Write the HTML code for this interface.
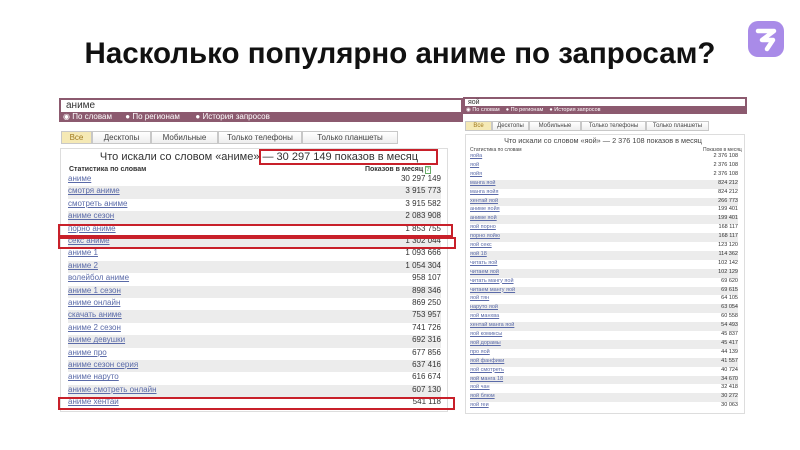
<!DOCTYPE html>
<html><head><meta charset="utf-8"><style>
*{margin:0;padding:0;box-sizing:border-box}
body{width:800px;height:450px;background:#fff;position:relative;overflow:hidden;font-family:"Liberation Sans",Arial,sans-serif}
.abs{position:absolute}
h1{position:absolute;left:0;width:800px;top:37px;text-align:center;font-size:29.5px;font-weight:bold;color:#111}
.inp{background:#fff;border:2px solid #8c5a6f;border-bottom:none;color:#333}
.strip{background:#8c5a6f;color:#fff;white-space:nowrap}
.tab{position:absolute;border:1px solid #c8c8c8;background:linear-gradient(#fff,#eee);color:#444;text-align:center}
.tab.on{background:#f5e9b5;color:#a07a20}
.box{position:absolute;border:1px solid #ddd;background:#fff}
.row{position:absolute;white-space:nowrap}
.row a{color:#5a6aa8;text-decoration:underline}
.row b{position:absolute;right:0;font-weight:normal;color:#333}
.g{background:#ececec}
.red{position:absolute;border:2px solid #c8202a}
</style></head><body>
<h1>Насколько популярно аниме по запросам?</h1>
<svg class="abs" style="left:747px;top:20px" width="38" height="38" viewBox="0 0 38 38"><rect x="1" y="1" width="36" height="36" rx="10" fill="#a98be8"/><path d="M11 11H27L15 20H26L20 29" fill="none" stroke="#fff" stroke-width="4.5" stroke-linejoin="round" stroke-linecap="round"/></svg>

<!-- LEFT -->
<div class="abs inp" style="left:59px;top:98px;width:404px;height:14px;font-size:10px;padding-left:5px;line-height:12px">аниме</div>
<div class="abs strip" style="left:59px;top:112px;width:404px;height:10px;font-size:8px;line-height:10px;padding-left:4px">◉ По словам &nbsp;&nbsp;&nbsp;&nbsp;&nbsp;● По регионам &nbsp;&nbsp;&nbsp;&nbsp;&nbsp;&nbsp;● История запросов</div>
<div class="tab on" style="left:61px;top:131px;width:31px;height:13px;font-size:8px;line-height:12px">Все</div>
<div class="tab" style="left:92px;top:131px;width:59px;height:13px;font-size:8px;line-height:12px">Десктопы</div>
<div class="tab" style="left:151px;top:131px;width:67px;height:13px;font-size:8px;line-height:12px">Мобильные</div>
<div class="tab" style="left:218px;top:131px;width:84px;height:13px;font-size:8px;line-height:12px">Только телефоны</div>
<div class="tab" style="left:302px;top:131px;width:96px;height:13px;font-size:8px;line-height:12px">Только планшеты</div>
<div class="box" style="left:60px;top:148px;width:388px;height:264px"></div>
<div class="abs" style="left:65px;top:151px;width:388px;text-align:center;font-size:11px;color:#333;white-space:nowrap">Что искали со словом «аниме» — 30 297 149 показов в месяц</div>
<div class="abs" style="left:69px;top:166px;font-size:7px;font-weight:bold;color:#333">Статистика по словам</div>
<div class="abs" style="left:365px;top:166px;font-size:7px;font-weight:bold;color:#333">Показов в месяц <span style="color:#6a6;border:1px solid #6a6;font-size:6px">?</span></div>
<div id="L" style="font-size:8px">
<div class="row" style="left:68px;top:174px;width:373px;height:12.4px"><a>аниме</a><b>30 297 149</b></div>
<div class="row g" style="left:68px;top:186.4px;width:373px;height:12.4px"><a>смотря аниме</a><b>3 915 773</b></div>
<div class="row" style="left:68px;top:198.8px;width:373px;height:12.4px"><a>смотреть аниме</a><b>3 915 582</b></div>
<div class="row g" style="left:68px;top:211.2px;width:373px;height:12.4px"><a>аниме сезон</a><b>2 083 908</b></div>
<div class="row" style="left:68px;top:223.6px;width:373px;height:12.4px"><a>порно аниме</a><b>1 853 755</b></div>
<div class="row g" style="left:68px;top:236px;width:373px;height:12.4px"><a>секс аниме</a><b>1 302 044</b></div>
<div class="row" style="left:68px;top:248.4px;width:373px;height:12.4px"><a>аниме 1</a><b>1 093 666</b></div>
<div class="row g" style="left:68px;top:260.8px;width:373px;height:12.4px"><a>аниме 2</a><b>1 054 304</b></div>
<div class="row" style="left:68px;top:273.2px;width:373px;height:12.4px"><a>волейбол аниме</a><b>958 107</b></div>
<div class="row g" style="left:68px;top:285.6px;width:373px;height:12.4px"><a>аниме 1 сезон</a><b>898 346</b></div>
<div class="row" style="left:68px;top:298px;width:373px;height:12.4px"><a>аниме онлайн</a><b>869 250</b></div>
<div class="row g" style="left:68px;top:310.4px;width:373px;height:12.4px"><a>скачать аниме</a><b>753 957</b></div>
<div class="row" style="left:68px;top:322.8px;width:373px;height:12.4px"><a>аниме 2 сезон</a><b>741 726</b></div>
<div class="row g" style="left:68px;top:335.2px;width:373px;height:12.4px"><a>аниме девушки</a><b>692 316</b></div>
<div class="row" style="left:68px;top:347.6px;width:373px;height:12.4px"><a>аниме про</a><b>677 856</b></div>
<div class="row g" style="left:68px;top:360px;width:373px;height:12.4px"><a>аниме сезон серия</a><b>637 416</b></div>
<div class="row" style="left:68px;top:372.4px;width:373px;height:12.4px"><a>аниме наруто</a><b>616 674</b></div>
<div class="row g" style="left:68px;top:384.8px;width:373px;height:12.4px"><a>аниме смотреть онлайн</a><b>607 130</b></div>
<div class="row" style="left:68px;top:397.2px;width:373px;height:12.4px"><a>аниме хентай</a><b>541 118</b></div>
</div>
<div class="red" style="left:259px;top:149px;width:179px;height:16px"></div>
<div class="red" style="left:58px;top:224px;width:395px;height:13px"></div>
<div class="red" style="left:58px;top:237px;width:398px;height:12px"></div>
<div class="red" style="left:58px;top:397px;width:397px;height:13px"></div>

<!-- RIGHT -->
<div class="abs inp" style="left:463px;top:97px;width:284px;height:9px;font-size:7px;padding-left:3px;line-height:8px">яой</div>
<div class="abs strip" style="left:463px;top:106px;width:284px;height:8px;font-size:5.5px;line-height:8px;padding-left:3px">◉ По словам &nbsp;&nbsp;&nbsp;● По регионам &nbsp;&nbsp;&nbsp;● История запросов</div>
<div class="tab on" style="left:465px;top:121px;width:27px;height:10px;font-size:6px;line-height:9px">Все</div>
<div class="tab" style="left:492px;top:121px;width:37px;height:10px;font-size:6px;line-height:9px">Десктопы</div>
<div class="tab" style="left:529px;top:121px;width:52px;height:10px;font-size:6px;line-height:9px">Мобильные</div>
<div class="tab" style="left:581px;top:121px;width:65px;height:10px;font-size:6px;line-height:9px">Только телефоны</div>
<div class="tab" style="left:646px;top:121px;width:63px;height:10px;font-size:6px;line-height:9px">Только планшеты</div>
<div class="box" style="left:465px;top:134px;width:280px;height:280px"></div>
<div class="abs" style="left:465px;top:136px;width:276px;text-align:center;font-size:7.3px;color:#444;white-space:nowrap">Что искали со словом «яой» — 2 376 108 показов в месяц</div>
<div class="abs" style="left:470px;top:147px;font-size:5px;color:#444">Статистика по словам</div>
<div class="abs" style="left:703px;top:147px;font-size:5px;color:#444">Показов в месяц</div>
<div style="font-size:5.5px">
<div class="row" style="left:470px;top:153px;width:268px;height:8.9px"><a>яойа</a><b>2 376 108</b></div>
<div class="row" style="left:470px;top:161.9px;width:268px;height:8.9px"><a>яой</a><b>2 376 108</b></div>
<div class="row" style="left:470px;top:170.8px;width:268px;height:8.9px"><a>яойя</a><b>2 376 108</b></div>
<div class="row g" style="left:470px;top:179.7px;width:268px;height:8.9px"><a>манга яой</a><b>824 212</b></div>
<div class="row" style="left:470px;top:188.6px;width:268px;height:8.9px"><a>манга яойя</a><b>824 212</b></div>
<div class="row g" style="left:470px;top:197.5px;width:268px;height:8.9px"><a>хентай яой</a><b>266 773</b></div>
<div class="row" style="left:470px;top:206.4px;width:268px;height:8.9px"><a>аниме яойя</a><b>199 401</b></div>
<div class="row g" style="left:470px;top:215.3px;width:268px;height:8.9px"><a>аниме яой</a><b>199 401</b></div>
<div class="row" style="left:470px;top:224.2px;width:268px;height:8.9px"><a>яой порно</a><b>168 117</b></div>
<div class="row g" style="left:470px;top:233.1px;width:268px;height:8.9px"><a>порно яойю</a><b>168 117</b></div>
<div class="row" style="left:470px;top:242px;width:268px;height:8.9px"><a>яой секс</a><b>123 120</b></div>
<div class="row g" style="left:470px;top:250.9px;width:268px;height:8.9px"><a>яой 18</a><b>114 362</b></div>
<div class="row" style="left:470px;top:259.8px;width:268px;height:8.9px"><a>читать яой</a><b>102 142</b></div>
<div class="row g" style="left:470px;top:268.7px;width:268px;height:8.9px"><a>читаем яой</a><b>102 129</b></div>
<div class="row" style="left:470px;top:277.6px;width:268px;height:8.9px"><a>читать мангу яой</a><b>69 620</b></div>
<div class="row g" style="left:470px;top:286.5px;width:268px;height:8.9px"><a>читаем мангу яой</a><b>69 615</b></div>
<div class="row" style="left:470px;top:295.4px;width:268px;height:8.9px"><a>яой тян</a><b>64 105</b></div>
<div class="row g" style="left:470px;top:304.3px;width:268px;height:8.9px"><a>наруто яой</a><b>63 054</b></div>
<div class="row" style="left:470px;top:313.2px;width:268px;height:8.9px"><a>яой манхва</a><b>60 558</b></div>
<div class="row g" style="left:470px;top:322.1px;width:268px;height:8.9px"><a>хентай манга яой</a><b>54 493</b></div>
<div class="row" style="left:470px;top:331px;width:268px;height:8.9px"><a>яой комиксы</a><b>45 837</b></div>
<div class="row g" style="left:470px;top:339.9px;width:268px;height:8.9px"><a>яой дорамы</a><b>45 417</b></div>
<div class="row" style="left:470px;top:348.8px;width:268px;height:8.9px"><a>про яой</a><b>44 139</b></div>
<div class="row g" style="left:470px;top:357.7px;width:268px;height:8.9px"><a>яой фанфики</a><b>41 557</b></div>
<div class="row" style="left:470px;top:366.6px;width:268px;height:8.9px"><a>яой смотреть</a><b>40 724</b></div>
<div class="row g" style="left:470px;top:375.5px;width:268px;height:8.9px"><a>яой манга 18</a><b>34 670</b></div>
<div class="row" style="left:470px;top:384.4px;width:268px;height:8.9px"><a>яой чан</a><b>32 418</b></div>
<div class="row g" style="left:470px;top:393.3px;width:268px;height:8.9px"><a>яой блюм</a><b>30 272</b></div>
<div class="row" style="left:470px;top:402.2px;width:268px;height:8.9px"><a>яой геи</a><b>30 063</b></div>
</div>
</body></html>
